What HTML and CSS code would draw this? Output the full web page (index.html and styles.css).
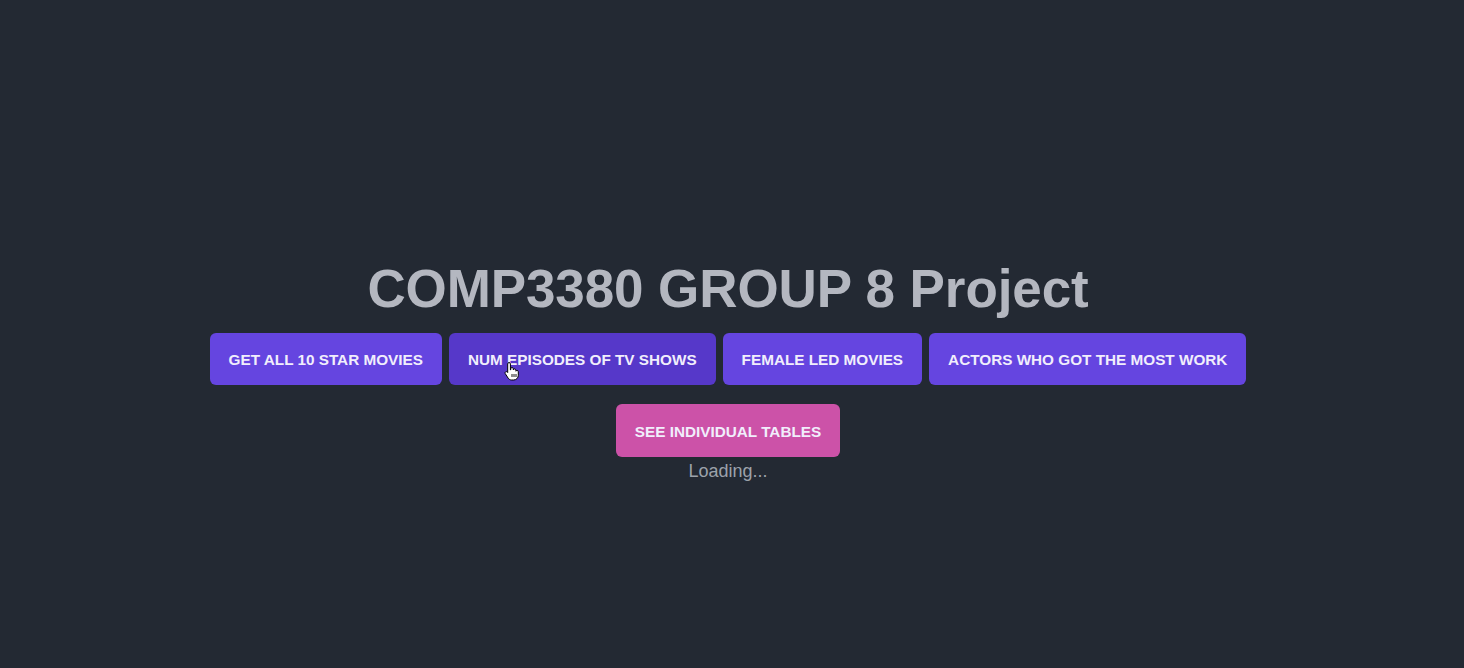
FILE: index.html
```html
<!DOCTYPE html>
<html>
<head>
<meta charset="utf-8">
<link rel="stylesheet" href="styles.css">
</head>
<body>
<main class="app">
  <h1 class="title">COMP3380 GROUP 8 Project</h1>
  <div class="actions">
    <button class="btn">GET ALL 10 STAR MOVIES</button>
    <button class="btn btn-hover">NUM EPISODES OF TV SHOWS
      <svg class="cursor" width="16" height="20" viewBox="0 0 16 20"><path d="M5 1.5c.8 0 1.4.6 1.4 1.4V9l.3-.1V7.8c0-.8.6-1.3 1.3-1.3s1.3.5 1.3 1.3v1.1c.2-.6.7-1 1.3-1 .7 0 1.3.6 1.3 1.3v1c.2-.5.7-.8 1.2-.8.7 0 1.2.6 1.2 1.3v3.6c0 2.6-2 4.7-4.600 4.7H7.6c-1.4 0-2.6-.7-3.4-1.8L1.3 12.7c-.4-.6-.3-1.4.3-1.8.6-.4 1.3-.3 1.8.2l.3.4V2.9c0-.8.6-1.4 1.3-1.4z" fill="#fff" stroke="#000" stroke-width="1"/><path d="M8 13v3M10 13v3M12 13v3" stroke="#000" stroke-width=".9"/></svg>
    </button>
    <button class="btn">FEMALE LED MOVIES</button>
    <button class="btn">ACTORS WHO GOT THE MOST WORK</button>
  </div>
  <div class="actions">
    <button class="btn btn-pink">SEE INDIVIDUAL TABLES</button>
  </div>
  <p class="loading">Loading...</p>
</main>
</body>
</html>
```

FILE: styles.css
```css
html, body {
  margin: 0;
  height: 100%;
}
body {
  background: #232933;
  font-family: "Liberation Sans", Arial, sans-serif;
  overflow: hidden;
}
.app {
  display: flex;
  flex-direction: column;
  align-items: center;
  padding: 257px 8px 0 0;
}
.title {
  margin: 0;
  font-size: 53px;
  font-weight: 700;
  color: #b4b7c0;
  line-height: 63px;
  letter-spacing: -0.1px;
}
.actions {
  display: flex;
  gap: 7px;
  justify-content: center;
  margin-top: 13px;
}
.actions + .actions {
  margin-top: 19px;
}
.btn {
  position: relative;
  font-family: "Liberation Sans", Arial, sans-serif;
  font-weight: 700;
  font-size: 15.3px;
  color: #f1eefc;
  background: #6545e0;
  border: none;
  border-radius: 6px;
  height: 52px;
  padding: 2px 19px 0;
  cursor: pointer;
}
.btn-hover {
  background: #5638c9;
}
.btn-pink {
  background: #cc52a8;
  height: 53px;
}
.cursor {
  position: absolute;
  left: 55px;
  top: 28px;
}
.loading {
  margin: 4px 0 0;
  font-size: 18px;
  color: #9ca2ab;
  line-height: 20px;
}
```
